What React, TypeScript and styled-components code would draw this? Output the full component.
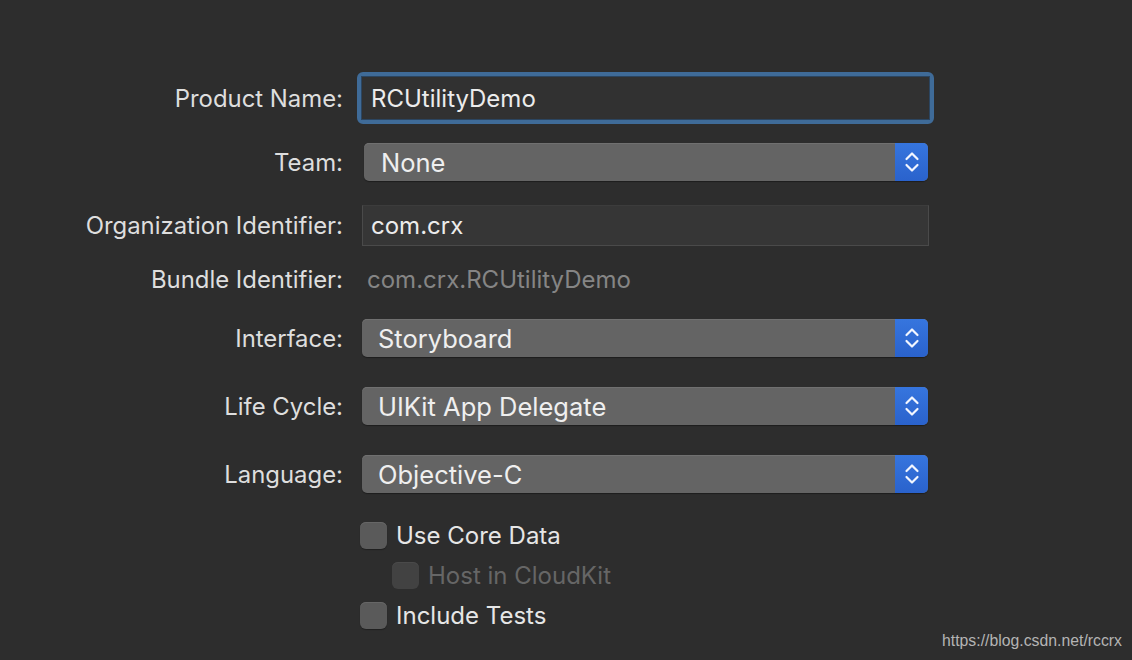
import React from "react"
import styled, { createGlobalStyle } from "styled-components"

const GlobalStyle = createGlobalStyle`
  html, body {
    margin: 0;
    padding: 0;
    background: #2d2d2d;
  }
  body {
    width: 1132px;
    height: 660px;
    overflow: hidden;
    font-family: Inter, "Noto Sans", "Liberation Sans", sans-serif;
    -webkit-font-smoothing: antialiased;
  }
`

const Page = styled.div`
  position: relative;
  width: 1132px;
  height: 660px;
  background: #2d2d2d;
`

const Form = styled.div`
  display: flex;
  flex-direction: column;
  padding-top: 72px;
`

const Row = styled.div<{ $h: number; $mt?: number }>`
  display: grid;
  grid-template-columns: 344px 1fr;
  align-items: center;
  height: ${p => p.$h}px;
  margin-top: ${p => p.$mt ?? 0}px;
`

const Label = styled.div`
  text-align: right;
  color: #dedede;
  font-size: 23.9px;
  padding-right: 1px;
  white-space: nowrap;
`

const Cell = styled.div<{ $ml?: number; $w: number }>`
  margin-left: ${p => p.$ml ?? 0}px;
  width: ${p => p.$w}px;
  height: 100%;
  display: flex;
  align-items: center;
`

const FocusRing = styled.div`
  box-sizing: border-box;
  width: 100%;
  height: 100%;
  border: 4px solid #3f6b98;
  border-radius: 6px;
  display: flex;
`

const FieldInner = styled.div`
  flex: 1;
  background: #313131;
  border: 1px solid #2b4560;
  display: flex;
  align-items: center;
  padding-left: 9px;
  color: #ececec;
  font-size: 24px;
`

const TextField = styled.div`
  box-sizing: border-box;
  width: 100%;
  height: 100%;
  background: #363636;
  border: 1px solid #4a4a4a;
  border-top-color: #3c3c3c;
  display: flex;
  align-items: center;
  padding-left: 8px;
  color: #ececec;
  font-size: 24px;
`

const Value = styled.div`
  color: #858585;
  font-size: 24px;
  padding-left: 5px;
`

const Popup = styled.div`
  box-sizing: border-box;
  width: 100%;
  height: 100%;
  display: flex;
  border-radius: 5px;
  overflow: hidden;
  background: #646464;
  box-shadow: inset 0 1px 0 #707070, 0 1px 1px rgba(0, 0, 0, 0.35);
`

const PopupText = styled.div<{ $pl: number }>`
  flex: 1;
  display: flex;
  align-items: center;
  padding-left: ${p => p.$pl}px;
  color: #efefef;
  font-size: 25.5px;
`

const Stepper = styled.div`
  width: 33px;
  background: linear-gradient(#3675de, #2a62cc);
  display: flex;
  align-items: center;
  justify-content: center;
`

const CheckRow = styled.div<{ $ml: number; $mt: number }>`
  display: flex;
  align-items: center;
  gap: 9px;
  margin-left: ${p => p.$ml}px;
  margin-top: ${p => p.$mt}px;
  height: 27px;
`

const Box = styled.div<{ $disabled?: boolean }>`
  box-sizing: border-box;
  width: 27px;
  height: 27px;
  border-radius: 6px;
  background: ${p => (p.$disabled ? "#424242" : "#5a5a5a")};
  box-shadow: ${p => (p.$disabled ? "inset 0 1px 0 #4a4a4a" : "inset 0 1px 0 #666, 0 1px 1px rgba(0,0,0,0.3)")};
`

const CheckLabel = styled.span<{ $disabled?: boolean }>`
  color: ${p => (p.$disabled ? "#666666" : "#e6e6e6")};
  font-size: 24px;
`

const Watermark = styled.div`
  position: absolute;
  right: 10px;
  bottom: 10px;
  color: #b4b4b4;
  font-family: "Liberation Sans", Arial, sans-serif;
  font-size: 15.8px;
`

const Chevrons = () => (
  <svg width="16" height="24" viewBox="0 0 16 24" fill="none" stroke="#f2f6ff" strokeWidth="2.2" strokeLinecap="round" strokeLinejoin="round">
    <path d="M2.5 9 L8 3.5 L13.5 9" />
    <path d="M2.5 15 L8 20.5 L13.5 15" />
  </svg>
)

const PopupField = ({ text, pl }: { text: string; pl: number }) => (
  <Popup>
    <PopupText $pl={pl}>{text}</PopupText>
    <Stepper>
      <Chevrons />
    </Stepper>
  </Popup>
)

export default function App() {
  return (
    <Page>
      <GlobalStyle />
      <Form>
        <Row $h={52}>
          <Label>Product Name:</Label>
          <Cell $ml={13} $w={577}>
            <FocusRing>
              <FieldInner>RCUtilityDemo</FieldInner>
            </FocusRing>
          </Cell>
        </Row>
        <Row $h={38} $mt={19}>
          <Label>Team:</Label>
          <Cell $ml={20} $w={564}>
            <PopupField text="None" pl={17} />
          </Cell>
        </Row>
        <Row $h={41} $mt={24}>
          <Label>Organization Identifier:</Label>
          <Cell $ml={18} $w={567}>
            <TextField>com.crx</TextField>
          </Cell>
        </Row>
        <Row $h={30} $mt={18}>
          <Label>Bundle Identifier:</Label>
          <Cell $ml={18} $w={567}>
            <Value>com.crx.RCUtilityDemo</Value>
          </Cell>
        </Row>
        <Row $h={38} $mt={25}>
          <Label>Interface:</Label>
          <Cell $ml={18} $w={566}>
            <PopupField text="Storyboard" pl={16} />
          </Cell>
        </Row>
        <Row $h={38} $mt={30}>
          <Label>Life Cycle:</Label>
          <Cell $ml={18} $w={566}>
            <PopupField text="UIKit App Delegate" pl={16} />
          </Cell>
        </Row>
        <Row $h={38} $mt={30}>
          <Label>Language:</Label>
          <Cell $ml={18} $w={566}>
            <PopupField text="Objective-C" pl={16} />
          </Cell>
        </Row>
        <CheckRow $ml={360} $mt={29}>
          <Box />
          <CheckLabel>Use Core Data</CheckLabel>
        </CheckRow>
        <CheckRow $ml={392} $mt={13}>
          <Box $disabled />
          <CheckLabel $disabled>Host in CloudKit</CheckLabel>
        </CheckRow>
        <CheckRow $ml={360} $mt={13}>
          <Box />
          <CheckLabel>Include Tests</CheckLabel>
        </CheckRow>
      </Form>
      <Watermark>https://blog.csdn.net/rccrx</Watermark>
    </Page>
  )
}
